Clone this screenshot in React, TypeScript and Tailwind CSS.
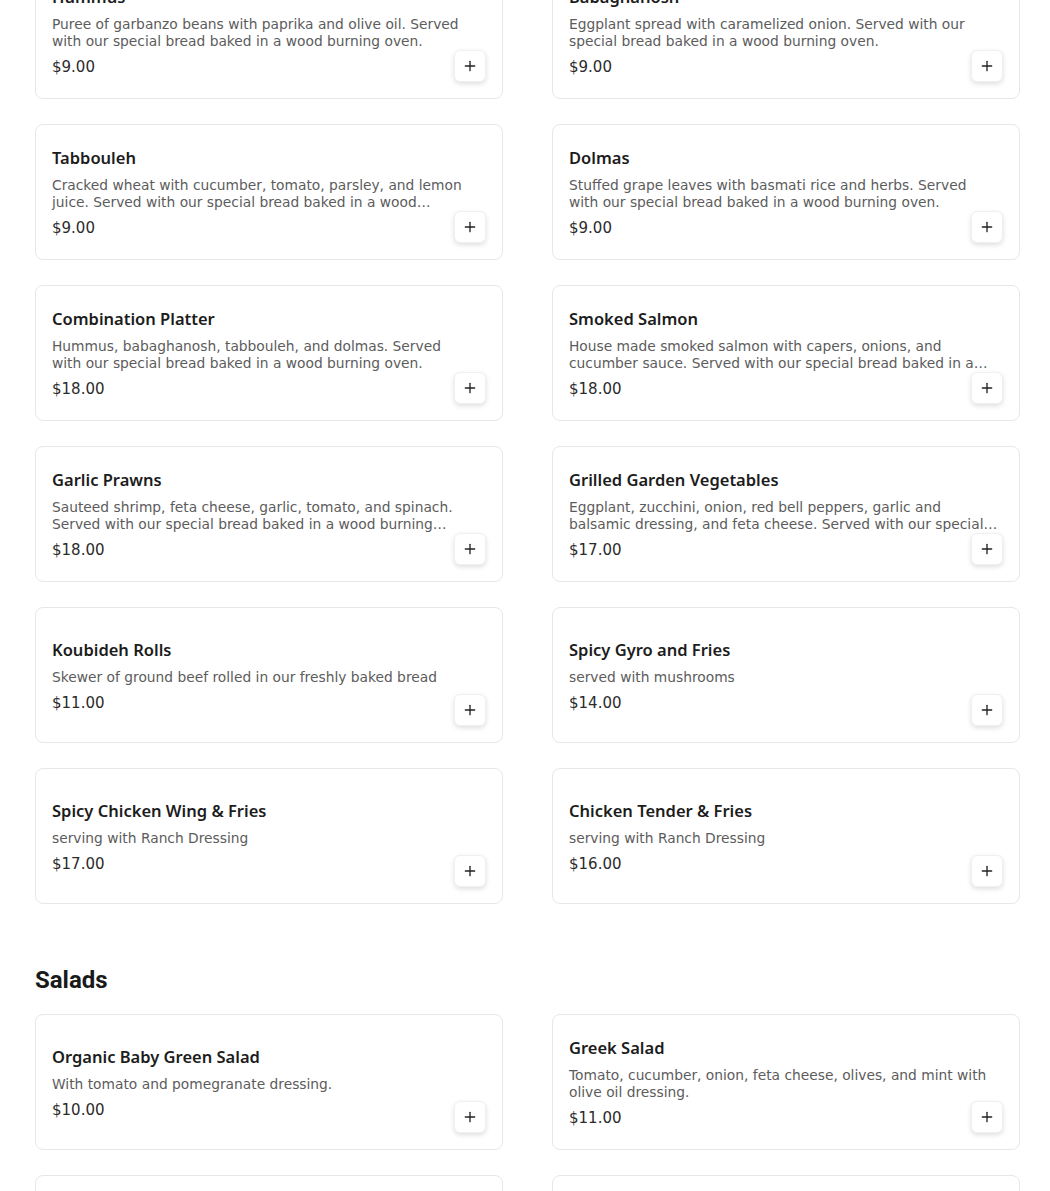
import { Plus } from "lucide-react";

type Item = { name: string; lines: string[]; price: string };

const starters: Item[] = [
  {
    name: "Hummus",
    lines: [
      "Puree of garbanzo beans with paprika and olive oil. Served",
      "with our special bread baked in a wood burning oven.",
    ],
    price: "$9.00",
  },
  {
    name: "Babaghanosh",
    lines: [
      "Eggplant spread with caramelized onion. Served with our",
      "special bread baked in a wood burning oven.",
    ],
    price: "$9.00",
  },
  {
    name: "Tabbouleh",
    lines: [
      "Cracked wheat with cucumber, tomato, parsley, and lemon",
      "juice. Served with our special bread baked in a wood…",
    ],
    price: "$9.00",
  },
  {
    name: "Dolmas",
    lines: [
      "Stuffed grape leaves with basmati rice and herbs. Served",
      "with our special bread baked in a wood burning oven.",
    ],
    price: "$9.00",
  },
  {
    name: "Combination Platter",
    lines: [
      "Hummus, babaghanosh, tabbouleh, and dolmas. Served",
      "with our special bread baked in a wood burning oven.",
    ],
    price: "$18.00",
  },
  {
    name: "Smoked Salmon",
    lines: [
      "House made smoked salmon with capers, onions, and",
      "cucumber sauce. Served with our special bread baked in a…",
    ],
    price: "$18.00",
  },
  {
    name: "Garlic Prawns",
    lines: [
      "Sauteed shrimp, feta cheese, garlic, tomato, and spinach.",
      "Served with our special bread baked in a wood burning…",
    ],
    price: "$18.00",
  },
  {
    name: "Grilled Garden Vegetables",
    lines: [
      "Eggplant, zucchini, onion, red bell peppers, garlic and",
      "balsamic dressing, and feta cheese. Served with our special…",
    ],
    price: "$17.00",
  },
  {
    name: "Koubideh Rolls",
    lines: ["Skewer of ground beef rolled in our freshly baked bread"],
    price: "$11.00",
  },
  {
    name: "Spicy Gyro and Fries",
    lines: ["served with mushrooms"],
    price: "$14.00",
  },
  {
    name: "Spicy Chicken Wing & Fries",
    lines: ["serving with Ranch Dressing"],
    price: "$17.00",
  },
  {
    name: "Chicken Tender & Fries",
    lines: ["serving with Ranch Dressing"],
    price: "$16.00",
  },
];

const salads: Item[] = [
  {
    name: "Organic Baby Green Salad",
    lines: ["With tomato and pomegranate dressing."],
    price: "$10.00",
  },
  {
    name: "Greek Salad",
    lines: [
      "Tomato, cucumber, onion, feta cheese, olives, and mint with",
      "olive oil dressing.",
    ],
    price: "$11.00",
  },
  {
    name: "Fattoush Salad",
    lines: ["Mixed greens with toasted pita and sumac dressing."],
    price: "$10.00",
  },
  {
    name: "Caesar Salad",
    lines: ["Romaine, parmesan and croutons."],
    price: "$10.00",
  },
];

function MenuCard({ item }: { item: Item }) {
  return (
    <div className="relative flex h-[136px] items-center rounded-lg border border-[#e7e7e7] bg-white px-4">
      <div className="flex flex-col">
        <p className="font-['Noto_Sans',sans-serif] text-[16.5px] leading-7 font-semibold text-[#1c1c1c]">
          {item.name}
        </p>
        <div className="mt-[5px] text-[13.8px] leading-[17px] text-[#5c5c5c]">
          {item.lines.map((line) => (
            <p key={line} className="whitespace-nowrap">
              {line}
            </p>
          ))}
        </div>
        <p className="mt-[5px] text-[15px] leading-6 text-[#2b2b2b]">{item.price}</p>
      </div>
      <button className="absolute right-4 bottom-4 flex size-8 items-center justify-center rounded-md border border-[#f0f0f0] bg-white text-[#222] shadow-[0_2px_5px_rgba(0,0,0,0.13)]">
        <Plus size={16} strokeWidth={2} />
      </button>
    </div>
  );
}

export default function App() {
  return (
    <div
      className="h-[1191px] w-full overflow-hidden bg-white"
      style={{ fontFamily: '"DejaVu Sans", sans-serif' }}
    >
      <div className="mt-[-37px] pr-[30px] pl-[35px]">
        <div className="grid grid-cols-2 gap-x-[49px] gap-y-[25px]">
          {starters.map((item) => (
            <MenuCard key={item.name} item={item} />
          ))}
        </div>
        <h2 className="mt-[60px] mb-[18px] font-['Roboto',sans-serif] text-2xl leading-8 font-bold text-[#1a1a1a]">
          Salads
        </h2>
        <div className="grid grid-cols-2 gap-x-[49px] gap-y-[25px]">
          {salads.map((item) => (
            <MenuCard key={item.name} item={item} />
          ))}
        </div>
      </div>
    </div>
  );
}
